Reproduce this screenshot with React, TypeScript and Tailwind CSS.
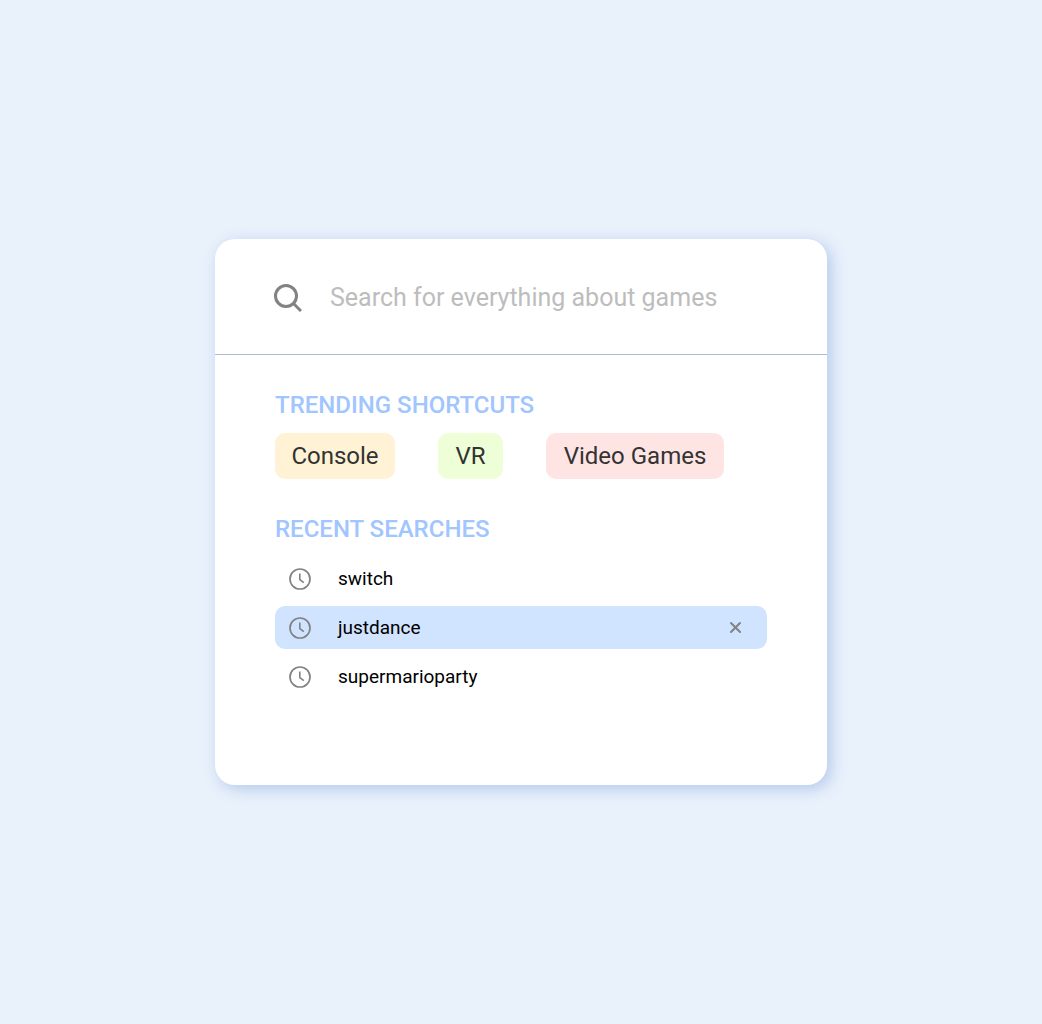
import { useState } from "react";

const shortcuts = [
  { label: "Console", className: "min-w-[120px] bg-[#fff2d5]" },
  { label: "VR", className: "min-w-[65px] bg-[#eeffd8]" },
  { label: "Video Games", className: "min-w-[178px] bg-[#ffe4e4]" },
];

function SearchIcon() {
  return (
    <svg viewBox="0 0 28 28" className="size-7 shrink-0 text-[#828282]" fill="none" stroke="currentColor" strokeWidth="3">
      <circle cx="12" cy="12" r="10.5" />
      <path d="M19.5 19.5l7.5 7.5" />
    </svg>
  );
}

function ClockIcon() {
  return (
    <svg viewBox="0 0 23 23" className="size-[23px] shrink-0 text-[#828282]" fill="none" stroke="currentColor">
      <circle cx="11" cy="12" r="10" strokeWidth="1.7" />
      <path d="M10.8 6.5v6l4 3.2" strokeWidth="1.6" />
    </svg>
  );
}

function CloseIcon() {
  return (
    <svg viewBox="0 0 13 13" className="size-[13px]" fill="none" stroke="currentColor" strokeWidth="2" strokeLinecap="round">
      <path d="M2 2l9 9M11 2l-9 9" />
    </svg>
  );
}

export default function App() {
  const [query, setQuery] = useState("");
  const [active, setActive] = useState("justdance");
  const [recent, setRecent] = useState(["switch", "justdance", "supermarioparty"]);

  const removeSearch = (name: string) => {
    setRecent(recent.filter((item) => item !== name));
  };

  return (
    <div className="min-h-screen flex items-center justify-center bg-[#e9f1fb] font-['Roboto','Noto_Sans',sans-serif]">
      <main className="w-full max-w-[612px] rounded-[20px] bg-white shadow-[4px_4px_16px_#b4c9ec]">
        {/* Search bar */}
        <label className="flex items-center gap-7 border-b border-[#adbdd6] px-[59px] pt-[43px] pb-10">
          <SearchIcon />
          <input
            type="text"
            aria-label="Search"
            value={query}
            onChange={(e) => setQuery(e.target.value)}
            placeholder="Search for everything about games"
            className="h-8 min-w-0 flex-1 text-[25px] text-[#333333] outline-none placeholder:text-[#bdbdbd]"
          />
        </label>

        <div className="px-[60px] pt-[34px] pb-[87px]">
          <h2 className="text-2xl font-medium text-[#a0c5ff]">TRENDING SHORTCUTS</h2>
          <div className="mt-3 flex flex-wrap gap-[43px]">
            {shortcuts.map((item) => (
              <button
                key={item.label}
                onClick={() => setQuery(item.label)}
                className={`h-[46px] rounded-[10px] text-2xl text-[#333333] ${item.className}`}
              >
                {item.label}
              </button>
            ))}
          </div>

          {/* Recent searches */}
          <h2 className="mt-[34px] text-2xl font-medium text-[#a0c5ff]">RECENT SEARCHES</h2>
          <ul className="mt-3 space-y-1.5">
            {recent.map((name) => (
              <li
                key={name}
                onMouseEnter={() => setActive(name)}
                className={`flex h-[43px] items-center rounded-[10px] pl-3.5 pr-[25px] ${active === name ? "bg-[#d0e3ff]" : ""}`}
              >
                <button onClick={() => setQuery(name)} className="flex flex-1 items-center gap-[26px] text-[19px] leading-[27px] text-black">
                  <ClockIcon />
                  {name}
                </button>
                {active === name && (
                  <button aria-label={`Remove ${name}`} onClick={() => removeSearch(name)} className="text-[#828282]">
                    <CloseIcon />
                  </button>
                )}
              </li>
            ))}
          </ul>
        </div>
      </main>
    </div>
  );
}
